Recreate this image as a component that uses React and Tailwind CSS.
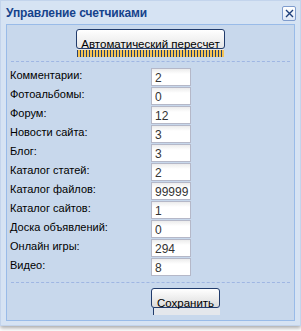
import { useState } from "react";

const counters = [
  { name: "comments", label: "Комментарии:", value: "2" },
  { name: "photos", label: "Фотоальбомы:", value: "0" },
  { name: "forum", label: "Форум:", value: "12" },
  { name: "news", label: "Новости сайта:", value: "3" },
  { name: "blog", label: "Блог:", value: "3" },
  { name: "articles", label: "Каталог статей:", value: "2" },
  { name: "files", label: "Каталог файлов:", value: "99999" },
  { name: "sites", label: "Каталог сайтов:", value: "1" },
  { name: "board", label: "Доска объявлений:", value: "0" },
  { name: "games", label: "Онлайн игры:", value: "294" },
  { name: "video", label: "Видео:", value: "8" },
];

export default function App() {
  const [values, setValues] = useState(
    Object.fromEntries(counters.map((c) => [c.name, c.value]))
  );

  const handleChange = (e) => {
    const { name, value } = e.target;
    setValues((prev) => ({ ...prev, [name]: value }));
  };

  return (
    <div className="w-[301px] h-[331px] bg-white font-['Liberation_Sans',Arial,sans-serif]">
      <div className="w-[301px] h-[326px] bg-[#d6e3f3] border border-[#c3d4ec] shadow-[0_2px_4px_rgba(0,0,0,0.35)] flex flex-col">
        {/* title */}
        <div className="h-[23px] flex items-center justify-between pl-[5px] pr-[4px]">
          <span className="text-[12px] font-bold text-[#15428b] leading-none mt-[1px] tracking-[-0.1px]">
            Управление счетчиками
          </span>
          <button className="w-[14px] h-[15px] mt-[1px] border border-[#7f9ccd] rounded-[2px] bg-[linear-gradient(#ffffff,#dfe8f6)] flex items-center justify-center">
            <svg width="9" height="9" viewBox="0 0 9 9">
              <path d="M1 1L8 8M8 1L1 8" stroke="#1e3f7a" strokeWidth="1.4" />
            </svg>
          </button>
        </div>

        {/* panel */}
        <div className="mx-[5px] h-[297px] border border-[#99bbe8] bg-[#c8d8ec] flex flex-col">
          <div className="flex flex-col items-center pt-[4px]">
            <button className="w-[149px] h-[20px] border border-[#213b6b] rounded-[3px] bg-[linear-gradient(#ffffff,#e6e6e6)] text-[11.5px] text-black leading-none flex items-end justify-center">
              <span className="translate-y-[2px]">Автоматический пересчет</span>
            </button>
            <div className="w-[147px] h-[8px] border-t border-[#e8e8e8] bg-[repeating-linear-gradient(90deg,#233f73_0_1px,#f4c354_1px_3px)]" />
          </div>

          <div className="mx-[4px] mt-[4px] border-t border-dashed border-[#9fb6e3]" />

          <div className="flex flex-col gap-[1px] mt-[6px] pl-[3px]">
            {counters.map((c) => (
              <div key={c.name} className="flex items-center h-[18px]">
                <label
                  htmlFor={c.name}
                  className="w-[141px] text-[11px] text-black leading-none -mt-[3px]"
                >
                  {c.label}
                </label>
                <input
                  id={c.name}
                  name={c.name}
                  value={values[c.name]}
                  onChange={handleChange}
                  className="w-[40px] h-[18px] border border-[#b5b8c8] bg-[linear-gradient(#ececec,#ffffff_5px)] pl-[3px] pr-0 pt-[2px] text-[12px] text-[#333333] outline-none"
                />
              </div>
            ))}
          </div>

          <div className="mx-[4px] mt-[6px] border-t border-dashed border-[#9fb6e3]" />

          <div className="pl-[144px] mt-[5px]">
            <button className="w-[69px] h-[20px] border border-[#213b6b] rounded-[3px] bg-[linear-gradient(#ffffff,#dcdcdc)] text-[11.5px] text-black leading-none flex items-end justify-center">
              <span className="translate-y-[2px]">Сохранить</span>
            </button>
            <div className="ml-[2px] w-[67px] h-[7px] border-l border-[#213b6b] bg-[#e4e7ec]" />
          </div>
        </div>
      </div>
    </div>
  );
}
